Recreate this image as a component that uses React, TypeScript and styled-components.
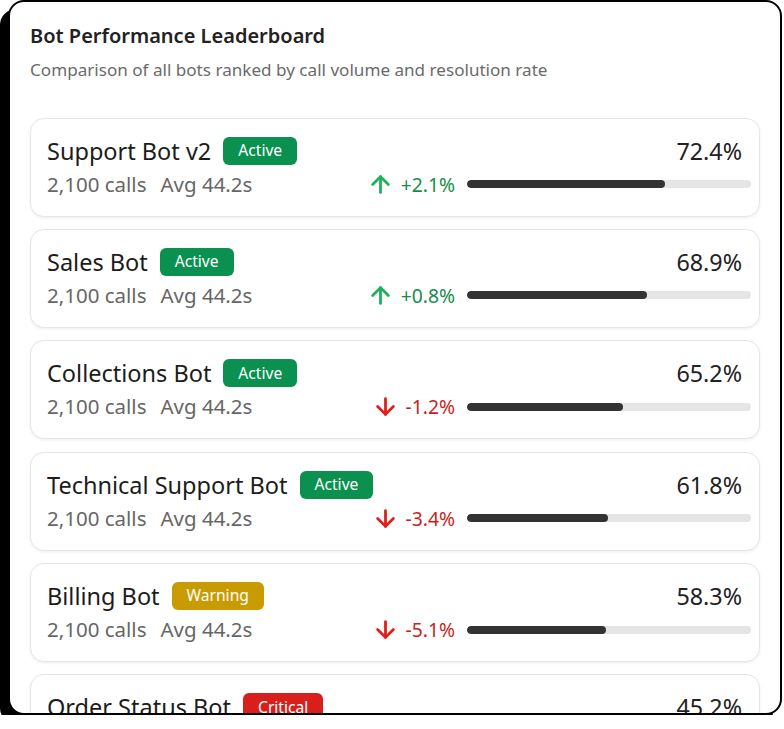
import React from "react";
import styled, { createGlobalStyle } from "styled-components";
import { ArrowUp, ArrowDown } from "lucide-react";

const GlobalStyle = createGlobalStyle`
  html, body {
    margin: 0;
    padding: 0;
    background: #ffffff;
  }
  body {
    font-family: "Noto Sans", "Open Sans", sans-serif;
  }
  #root {
    padding-left: 8px;
  }
`;

type Status = "Active" | "Warning" | "Critical";

interface Bot {
  name: string;
  status: Status;
  calls: string;
  avg: string;
  rate: string;
  delta: string;
  up: boolean;
  fill: number;
}

const bots: Bot[] = [
  { name: "Support Bot v2", status: "Active", calls: "2,100 calls", avg: "Avg 44.2s", rate: "72.4%", delta: "+2.1%", up: true, fill: 69.8 },
  { name: "Sales Bot", status: "Active", calls: "2,100 calls", avg: "Avg 44.2s", rate: "68.9%", delta: "+0.8%", up: true, fill: 63.4 },
  { name: "Collections Bot", status: "Active", calls: "2,100 calls", avg: "Avg 44.2s", rate: "65.2%", delta: "-1.2%", up: false, fill: 55 },
  { name: "Technical Support Bot", status: "Active", calls: "2,100 calls", avg: "Avg 44.2s", rate: "61.8%", delta: "-3.4%", up: false, fill: 49.6 },
  { name: "Billing Bot", status: "Warning", calls: "2,100 calls", avg: "Avg 44.2s", rate: "58.3%", delta: "-5.1%", up: false, fill: 49 },
  { name: "Order Status Bot", status: "Critical", calls: "2,100 calls", avg: "Avg 44.2s", rate: "45.2%", delta: "-8.7%", up: false, fill: 38 },
  { name: "Onboarding Bot", status: "Critical", calls: "2,100 calls", avg: "Avg 44.2s", rate: "41.0%", delta: "-9.2%", up: false, fill: 33 },
];

const badgeColors: Record<Status, string> = {
  Active: "#0a9150",
  Warning: "#c99b02",
  Critical: "#d91f1c",
};

const Panel = styled.section`
  box-sizing: border-box;
  width: 774px;
  height: 715px;
  background: #ffffff;
  border: 2px solid #000000;
  border-radius: 16px;
  box-shadow: -8px 9px 0 #000000;
  padding: 20px 20px 0 20px;
  overflow: hidden;
`;

const Header = styled.header`
  display: flex;
  flex-direction: column;
  gap: 9px;
  margin-bottom: 36px;
`;

const Title = styled.h2`
  margin: 0;
  font-size: 20px;
  font-weight: 600;
  line-height: 1.362;
  color: #222222;
`;

const Subtitle = styled.p`
  margin: 0;
  font-size: 17.1px;
  line-height: 1.362;
  color: #6b6b6b;
`;

const List = styled.div`
  display: flex;
  flex-direction: column;
  gap: 12.4px;
`;

const Card = styled.article`
  box-sizing: border-box;
  display: flex;
  flex-direction: column;
  gap: 6px;
  padding: 18px 8px 18px 16px;
  border: 1px solid #e6e6e6;
  border-radius: 14px;
  box-shadow: 0 1px 3px rgba(0, 0, 0, 0.07);
  background: #ffffff;
`;

const Row = styled.div`
  display: flex;
  align-items: center;
  justify-content: space-between;
`;

const NameGroup = styled.div`
  display: flex;
  align-items: center;
  gap: 12px;
  height: 28px;
`;

const Name = styled.span`
  font-size: 23.5px;
  line-height: 28px;
  color: #1c1c1c;
`;

const Badge = styled.span<{ $status: Status }>`
  display: inline-flex;
  align-items: center;
  height: 28px;
  padding: 0 15px;
  border-radius: 6px;
  background: ${(p) => badgeColors[p.$status]};
  color: #ffffff;
  font-size: 15.6px;
  line-height: 1;
`;

const Rate = styled.span`
  font-size: 23.3px;
  line-height: 28px;
  color: #222222;
  margin-right: 9px;
`;

const Stats = styled.div`
  display: flex;
  gap: 14px;
  font-size: 20.5px;
  line-height: 27px;
  color: #666666;
`;

const Trend = styled.div`
  display: flex;
  align-items: center;
`;

const TrendIcon = styled.span<{ $up: boolean }>`
  display: inline-flex;
  color: ${(p) => (p.$up ? "#1fb15a" : "#e01f1c")};
  margin-right: 7px;
`;

const Delta = styled.span<{ $up: boolean }>`
  font-size: 19.3px;
  line-height: 27px;
  color: ${(p) => (p.$up ? "#178c4a" : "#c91f1d")};
  margin-right: 12px;
`;

const Track = styled.div`
  width: 284px;
  height: 8px;
  border-radius: 4px;
  background: #e5e5e5;
  overflow: hidden;
`;

const Fill = styled.div`
  height: 100%;
  border-radius: 4px;
  background: #333333;
`;

function BotCard({ bot }: { bot: Bot }) {
  const Icon = bot.up ? ArrowUp : ArrowDown;
  return (
    <Card>
      <Row>
        <NameGroup>
          <Name>{bot.name}</Name>
          <Badge $status={bot.status}>{bot.status}</Badge>
        </NameGroup>
        <Rate>{bot.rate}</Rate>
      </Row>
      <Row>
        <Stats>
          <span>{bot.calls}</span>
          <span>{bot.avg}</span>
        </Stats>
        <Trend>
          <TrendIcon $up={bot.up}>
            <Icon size={27} strokeWidth={2.5} />
          </TrendIcon>
          <Delta $up={bot.up}>{bot.delta}</Delta>
          <Track>
            <Fill style={{ width: `${bot.fill}%` }} />
          </Track>
        </Trend>
      </Row>
    </Card>
  );
}

export default function App() {
  return (
    <>
      <GlobalStyle />
      <Panel>
        <Header>
          <Title>Bot Performance Leaderboard</Title>
          <Subtitle>Comparison of all bots ranked by call volume and resolution rate</Subtitle>
        </Header>
        <List>
          {bots.map((bot) => (
            <BotCard key={bot.name} bot={bot} />
          ))}
        </List>
      </Panel>
    </>
  );
}
